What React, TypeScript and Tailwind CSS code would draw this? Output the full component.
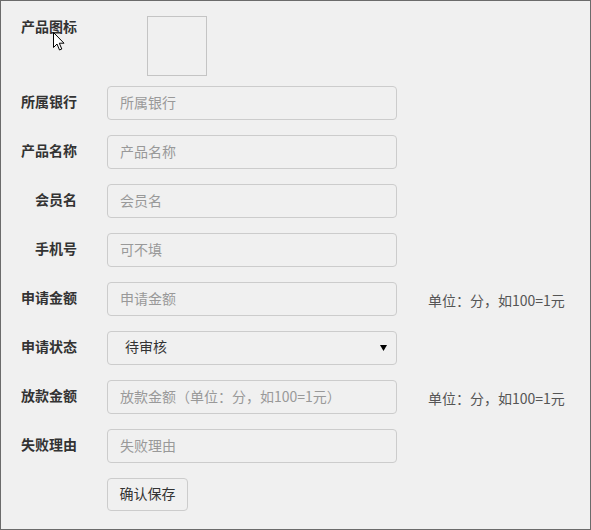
import React from "react";

const font = { fontFamily: '"Noto Sans CJK SC", "Noto Sans", sans-serif' };

function Label({ children }: { children: React.ReactNode }) {
  return (
    <div className="w-[76px] shrink-0 text-right text-[14px] font-bold text-[#333] leading-[20px] pb-[4px]">
      {children}
    </div>
  );
}

function Input({ placeholder }: { placeholder: string }) {
  return (
    <input
      placeholder={placeholder}
      className="w-[290px] h-[34px] rounded-[4px] border border-[#cccccc] bg-[#f0f0f0] px-[12px] pb-[3px] text-[14px] text-[#333] placeholder:text-[#999] outline-none"
      style={font}
    />
  );
}

const hint = "单位：分，如100=1元";

export default function App() {
  return (
    <div
      className="relative w-[591px] h-[530px] border border-[#6b6b6b] bg-[#f0f0f0] pt-[15px]"
      style={font}
    >
      <div className="flex flex-col">
        <div className="flex items-start gap-[30px] mb-[10px]">
          <div className="w-[76px] shrink-0 pl-[20px] text-[14px] font-bold text-[#333] leading-[20px]">
            产品图标
          </div>
          <div className="w-[60px] h-[60px] border border-[#c4c4c4] bg-[#f0f0f0] ml-[40px]" />
        </div>
        <div className="flex flex-col gap-[15px]">
          <div className="flex items-center gap-[30px]">
            <Label>所属银行</Label>
            <Input placeholder="所属银行" />
          </div>
          <div className="flex items-center gap-[30px]">
            <Label>产品名称</Label>
            <Input placeholder="产品名称" />
          </div>
          <div className="flex items-center gap-[30px]">
            <Label>会员名</Label>
            <Input placeholder="会员名" />
          </div>
          <div className="flex items-center gap-[30px]">
            <Label>手机号</Label>
            <Input placeholder="可不填" />
          </div>
          <div className="flex items-center gap-[30px]">
            <Label>申请金额</Label>
            <Input placeholder="申请金额" />
            <span className="ml-[1px] text-[14px] text-[#555] mt-[2px]">{hint}</span>
          </div>
          <div className="flex items-center gap-[30px]">
            <Label>申请状态</Label>
            <div className="relative w-[290px] h-[34px] rounded-[4px] border border-[#cccccc] bg-[#f0f0f0] flex items-center pl-[17px] pb-[3px] text-[14px] text-[#333]">
              待审核
              <svg
                className="absolute right-[9px] top-[13px]"
                width="7"
                height="6"
                viewBox="0 0 7 6"
              >
                <path d="M0 0 L7 0 L3.5 6 Z" fill="#000" />
              </svg>
            </div>
          </div>
          <div className="flex items-center gap-[30px]">
            <Label>放款金额</Label>
            <Input placeholder="放款金额（单位：分，如100=1元）" />
            <span className="ml-[1px] text-[14px] text-[#555] mt-[2px]">{hint}</span>
          </div>
          <div className="flex items-center gap-[30px]">
            <Label>失败理由</Label>
            <Input placeholder="失败理由" />
          </div>
          <div className="flex items-center gap-[30px]">
            <div className="w-[76px] shrink-0" />
            <button className="w-[81px] h-[33px] rounded-[4px] border border-[#cccccc] bg-[#f0f0f0] pb-[2px] text-[14px] text-[#333]">
              确认保存
            </button>
          </div>
        </div>
      </div>
      <svg
        className="absolute left-[52px] top-[31px]"
        width="13"
        height="20"
        viewBox="0 0 13 20"
      >
        <path
          d="M0.5 0.5 L0.5 15.5 L4 12 L6.5 18 L8.8 17 L6.3 11.2 L11 11.2 Z"
          fill="#ffffff"
          stroke="#000000"
          strokeWidth="1"
        />
      </svg>
    </div>
  );
}
